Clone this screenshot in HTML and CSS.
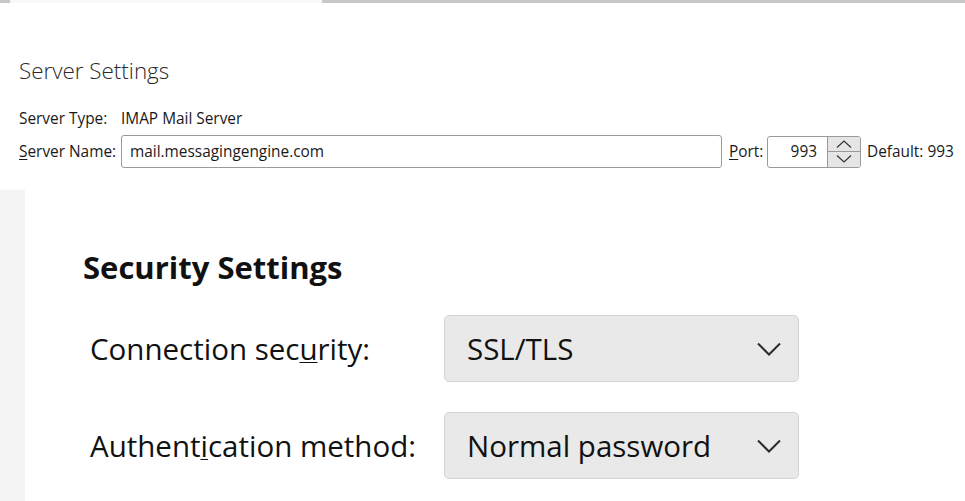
FILE: index.html
```html
<!DOCTYPE html>
<html lang="en">
<head>
<meta charset="utf-8">
<title>Server Settings</title>
<link rel="stylesheet" href="styles.css">
</head>
<body>
<div class="tabstrip">
  <span class="tab-edge"></span>
  <span class="tab-active"></span>
  <span class="tab-rest"></span>
</div>

<section class="server">
  <h2 class="server-title">Server Settings</h2>
  <div class="row type-row">
    <span class="label type-label">Server Type:</span>
    <span class="value">IMAP Mail Server</span>
  </div>
  <div class="row name-row">
    <label class="label name-label"><u>S</u>erver Name:</label>
    <div class="textbox host">mail.messagingengine.com</div>
    <label class="label port-label"><u>P</u>ort:</label>
    <div class="spin">
      <div class="spin-value">993</div>
      <div class="spin-buttons">
        <span class="spin-btn up"><svg viewBox="0 0 18 10" width="18" height="10"><path d="M2 8.5 L9 2 L16 8.5" fill="none" stroke="#333" stroke-width="1.2"/></svg></span>
        <span class="spin-btn down"><svg viewBox="0 0 18 10" width="18" height="10"><path d="M2 1.5 L9 8 L16 1.5" fill="none" stroke="#333" stroke-width="1.2"/></svg></span>
      </div>
    </div>
    <span class="label default">Default: 993</span>
  </div>
</section>

<section class="security">
  <div class="sidebar"></div>
  <div class="security-body">
    <h2 class="security-title">Security Settings</h2>
    <div class="field">
      <label class="field-label">Connection sec<u>u</u>rity:</label>
      <div class="select">
        <span class="select-text">SSL/TLS</span>
        <svg class="chev" viewBox="0 0 26 14" width="26" height="14"><path d="M2 1.5 L13 12.5 L24 1.5" fill="none" stroke="#2b2b2b" stroke-width="2"/></svg>
      </div>
    </div>
    <div class="field">
      <label class="field-label">Authent<u>i</u>cation method:</label>
      <div class="select">
        <span class="select-text">Normal password</span>
        <svg class="chev" viewBox="0 0 26 14" width="26" height="14"><path d="M2 1.5 L13 12.5 L24 1.5" fill="none" stroke="#2b2b2b" stroke-width="2"/></svg>
      </div>
    </div>
  </div>
</section>
</body>
</html>
```

FILE: styles.css
```css
html, body {
  margin: 0;
  padding: 0;
  background: #ffffff;
}
body {
  width: 965px;
  height: 501px;
  overflow: hidden;
  font-family: "Open Sans", "Noto Sans", sans-serif;
  color: #1a1a1a;
}
u {
  text-decoration: underline;
  text-underline-offset: 2px;
  text-decoration-thickness: 1px;
}

/* top strip */
.tabstrip {
  display: flex;
  height: 3px;
}
.tab-edge {
  width: 10px;
  background: #c8c8c8;
}
.tab-active {
  width: 312px;
  background: #f9f9f9;
}
.tab-rest {
  flex: 1;
  background: #c8c8c8;
}

/* server settings */
.server {
  padding: 54px 0 0 19px;
  height: 133px;
  box-sizing: content-box;
  white-space: nowrap;
}
.server-title {
  margin: 0;
  font-weight: 300;
  font-size: 22.4px;
  line-height: 28px;
  color: #2a2a2a;
}
.row {
  display: flex;
  align-items: center;
  font-size: 15.4px;
  color: #1a1a1a;
}
.type-row {
  margin-top: 22px;
  height: 22px;
}
.type-label {
  width: 102px;
}
.name-row {
  margin-top: 6px;
  height: 33px;
}
.name-label {
  width: 102px;
}
.textbox {
  box-sizing: border-box;
  width: 601px;
  height: 33px;
  border: 1px solid #9a9a9a;
  border-radius: 3px;
  padding: 0 8px;
  display: flex;
  align-items: center;
  background: #fff;
}
.port-label {
  margin-left: 7px;
  width: 38px;
}
.spin {
  box-sizing: border-box;
  display: flex;
  width: 94px;
  height: 32px;
  border: 1px solid #9a9a9a;
  border-radius: 3px;
  overflow: hidden;
}
.spin-value {
  flex: 1;
  display: flex;
  align-items: center;
  justify-content: flex-end;
  padding-right: 10px;
}
.spin-buttons {
  width: 32px;
  display: flex;
  flex-direction: column;
  border-left: 1px solid #9a9a9a;
  background: #e5e5e5;
}
.spin-btn {
  flex: 1;
  display: flex;
  align-items: center;
  justify-content: center;
}
.spin-btn.up {
  border-bottom: 1px solid #9a9a9a;
}
.default {
  margin-left: 6px;
}

/* security settings */
.security {
  display: flex;
  height: 311px;
}
.sidebar {
  width: 25px;
  background: #f3f3f3;
}
.security-body {
  flex: 1;
  padding: 57px 0 0 58px;
  white-space: nowrap;
}
.security-title {
  margin: 0;
  font-size: 31px;
  font-weight: 700;
  line-height: 40px;
  color: #111;
}
.field {
  display: flex;
  align-items: center;
  margin-top: 30px;
}
.field:first-of-type {
  margin-top: 28px;
}
.field-label {
  width: 354px;
  padding-left: 7px;
  font-size: 29.5px;
  color: #111;
}
.select {
  box-sizing: border-box;
  width: 355px;
  height: 67px;
  background: #e9e9e9;
  border: 1px solid #d4d4d4;
  border-radius: 5px;
  display: flex;
  align-items: center;
  justify-content: space-between;
  padding: 0 16px 0 22px;
}
.select-text {
  font-size: 29.5px;
  color: #111;
}
.chev {
  display: block;
}
```
